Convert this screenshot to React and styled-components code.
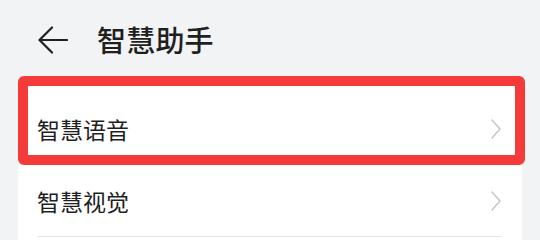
import React from 'react';
import styled, { createGlobalStyle } from 'styled-components';

const GlobalStyle = createGlobalStyle`
  html, body {
    margin: 0;
    padding: 0;
    background: #f1f3f5;
    font-family: "Noto Sans CJK SC", "Noto Sans", sans-serif;
  }
`;

const items = ['智慧语音', '智慧视觉'];

const BackIcon = () => (
  <svg width="30" height="28" viewBox="0 0 30 28" fill="none">
    <path d="M29 14H2M14 1.5L1.5 14L14 26.5" stroke="#1f1f1f" strokeWidth="2.2" strokeLinecap="round" strokeLinejoin="round" />
  </svg>
);

const Chevron = () => (
  <svg width="10" height="20" viewBox="0 0 10 20" fill="none">
    <path d="M1 1L9 10L1 19" stroke="#c6c6c6" strokeWidth="1.5" strokeLinecap="round" strokeLinejoin="round" />
  </svg>
);

const App = () => (
  <Page>
    <GlobalStyle />
    <Header>
      <BackButton><BackIcon /></BackButton>
      <Title>智慧助手</Title>
    </Header>
    <Card>
      {items.map((label) => (
        <Row key={label}>
          <RowLabel>{label}</RowLabel>
          <Chevron />
        </Row>
      ))}
      <Highlight />
    </Card>
  </Page>
);

const Page = styled.div`
  width: 540px;
  height: 240px;
  overflow: hidden;
  background: #f1f3f5;
`;

const Header = styled.div`
  height: 78px;
  display: flex;
  align-items: center;
  padding-left: 38px;
  box-sizing: border-box;
`;

const BackButton = styled.div`
  display: flex;
  align-items: center;
  margin-top: 1px;
  margin-right: 29px;
`;

const Title = styled.h1`
  margin: 0;
  font-size: 29px;
  font-weight: 500;
  color: #1f1f1f;
  letter-spacing: 0.2px;
`;

const Card = styled.div`
  position: relative;
  margin: 3px 18px 0;
  padding: 12px 0 24px;
  background: #ffffff;
  border-radius: 16px;
`;

const Row = styled.div`
  height: 72px;
  margin: 0 21px 0 19px;
  display: flex;
  align-items: center;
  justify-content: space-between;
  border-bottom: 1px solid #e4e4e4;
  box-sizing: border-box;
`;

const RowLabel = styled.span`
  font-size: 23px;
  color: #1f1f1f;
`;

const Highlight = styled.div`
  position: absolute;
  left: 0;
  top: -5px;
  width: 507px;
  height: 89px;
  border: 10px solid #f53a3a;
  border-radius: 6px;
  box-sizing: border-box;
  pointer-events: none;
`;

export default App;
